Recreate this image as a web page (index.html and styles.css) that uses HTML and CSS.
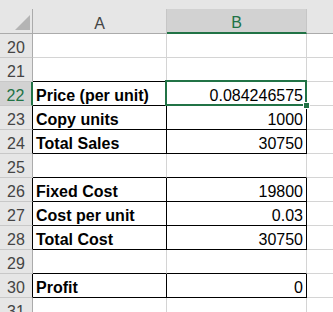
FILE: index.html
```html
<!DOCTYPE html>
<html>
<head>
<meta charset="utf-8">
<link rel="stylesheet" href="styles.css">
</head>
<body>
<div class="sheet">
  <div class="strip"></div>

  <div class="colhead corner"><svg class="tri" width="17" height="17" viewBox="0 0 17 17"><polygon points="16,1 16,16 1,16" fill="#b4b4b4"/></svg></div>
  <div class="colhead">A</div>
  <div class="colhead sel">B</div>
  <div class="colhead last"></div>

  <div class="rh">20</div><div class="c"></div><div class="c"></div><div class="c last"></div>
  <div class="rh">21</div><div class="c bb"></div><div class="c bb"></div><div class="c last"></div>
  <div class="rh rsel">22</div><div class="c lbl bx">Price (per unit)</div><div class="c num bx">0.084246575</div><div class="c last"></div>
  <div class="rh bk">23</div><div class="c lbl bx">Copy units</div><div class="c num bx">1000</div><div class="c last"></div>
  <div class="rh bk">24</div><div class="c lbl bx">Total Sales</div><div class="c num bx">30750</div><div class="c last"></div>
  <div class="rh">25</div><div class="c bb"></div><div class="c bb"></div><div class="c last"></div>
  <div class="rh bk">26</div><div class="c lbl bx">Fixed Cost</div><div class="c num bx">19800</div><div class="c last"></div>
  <div class="rh bk">27</div><div class="c lbl bx">Cost per unit</div><div class="c num bx">0.03</div><div class="c last"></div>
  <div class="rh bk">28</div><div class="c lbl bx">Total Cost</div><div class="c num bx">30750</div><div class="c last"></div>
  <div class="rh">29</div><div class="c bb"></div><div class="c bb"></div><div class="c last"></div>
  <div class="rh bk">30</div><div class="c lbl bx">Profit</div><div class="c num bx">0</div><div class="c last"></div>
  <div class="rh">31</div><div class="c"></div><div class="c"></div><div class="c last"></div>

  <div class="selection"><div class="handle"></div></div>
</div>
</body>
</html>
```
FILE: styles.css
```css
html, body {
  margin: 0;
  padding: 0;
  background: #ffffff;
  overflow: hidden;
}
.sheet {
  position: relative;
  display: grid;
  grid-template-columns: 33px 134px 140px 1fr;
  grid-template-rows: 9px 25px;
  grid-auto-rows: 24px;
  width: 333px;
  font-family: "Liberation Sans", Arial, sans-serif;
  font-size: 16px;
  line-height: 18px;
}
.strip {
  grid-column: 1 / -1;
  background: #e6e6e6;
}
.colhead {
  box-sizing: border-box;
  background: #e6e6e6;
  border-right: 1px solid #c6c6c6;
  border-bottom: 1px solid #ababab;
  color: #444444;
  display: flex;
  align-items: flex-end;
  justify-content: center;
}
.colhead.corner {
  position: relative;
  border-right: 1px solid #ababab;
  justify-content: flex-end;
  align-items: flex-end;
  padding: 0 1px 2px 0;
}
.tri {
  display: block;
}
.colhead.sel {
  background: #d2d2d2;
  color: #217346;
  border-bottom: 2px solid #217346;
  padding-bottom: 0;
}
.colhead.last {
  border-right: none;
}
.rh {
  box-sizing: border-box;
  background: #e6e6e6;
  color: #444444;
  border-right: 1px solid #ababab;
  border-bottom: 1px solid #c8c8c8;
  display: flex;
  align-items: flex-end;
  justify-content: center;
}
.rh.bk {
  border-right-color: #000000;
}
.rh.rsel {
  background: #d2d2d2;
  color: #217346;
  border-right: 2px solid #217346;
}
.c {
  box-sizing: border-box;
  border-right: 1px solid #d4d4d4;
  border-bottom: 1px solid #d4d4d4;
  color: #000000;
  display: flex;
  align-items: flex-end;
  white-space: nowrap;
  overflow: hidden;
}
.c.last {
  border-right: none;
}
.c.bb {
  border-bottom-color: #000000;
}
.c.bx {
  border-right-color: #000000;
  border-bottom-color: #000000;
}
.lbl {
  font-weight: bold;
  padding-left: 3px;
}
.num {
  justify-content: flex-end;
  padding-right: 3px;
}
.selection {
  position: absolute;
  left: 165px;
  top: 80px;
  width: 142px;
  height: 26px;
  box-sizing: border-box;
  border: 2px solid #217346;
}
.handle {
  position: absolute;
  right: -5px;
  bottom: -5px;
  width: 5px;
  height: 5px;
  background: #217346;
  border: 1px solid #ffffff;
}
```
